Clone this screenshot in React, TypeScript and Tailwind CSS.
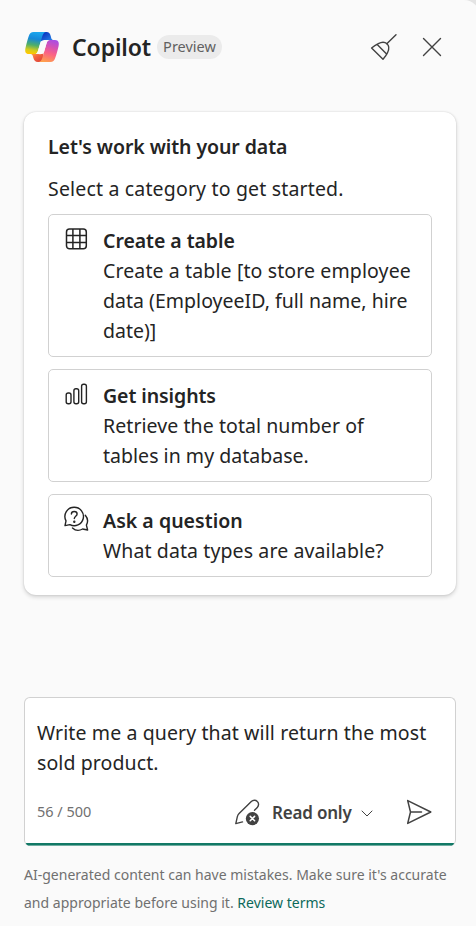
import React from "react";

type LineProps = { children: React.ReactNode; className?: string };

function Line({ children, className = "" }: LineProps) {
  return <span className={`block whitespace-nowrap ${className}`}>{children}</span>;
}

function CopilotLogo() {
  return (
    <svg width="36" height="32" viewBox="0 0 36 32" fill="none">
      <defs>
        <linearGradient id="left" x1="13" y1="0" x2="9" y2="23" gradientUnits="userSpaceOnUse">
          <stop offset="0.05" stopColor="#1AA7EE" />
          <stop offset="0.35" stopColor="#1688D8" />
          <stop offset="0.62" stopColor="#4DAE6A" />
          <stop offset="0.85" stopColor="#D5CC1C" />
          <stop offset="1" stopColor="#FFC800" />
        </linearGradient>
        <linearGradient id="right" x1="28" y1="8" x2="21" y2="31" gradientUnits="userSpaceOnUse">
          <stop stopColor="#A54DE8" />
          <stop offset="0.3" stopColor="#D251B8" />
          <stop offset="0.6" stopColor="#FA6186" />
          <stop offset="1" stopColor="#FFA04C" />
        </linearGradient>
        <linearGradient id="top" x1="20" y1="2" x2="25" y2="9" gradientUnits="userSpaceOnUse">
          <stop stopColor="#0B35C0" />
          <stop offset="1" stopColor="#1F74E0" />
        </linearGradient>
        <linearGradient id="bottom" x1="9" y1="22" x2="15" y2="31" gradientUnits="userSpaceOnUse">
          <stop stopColor="#FF9A3C" />
          <stop offset="0.5" stopColor="#F2603F" />
          <stop offset="1" stopColor="#E0483A" />
        </linearGradient>
      </defs>
      <path d="M14 1H22.500C25 1 26 2.500 26.700 5L27.300 7.200C27.600 8.400 28.400 9 30 9H22C19.500 9 18 9.500 17 10.500L16 8Z" fill="url(#top)" />
      <path d="M21 31H14C11 31 10 29.200 9.400 27L8.800 25C8.400 23.500 7.500 23 6 23H14C17 23 18.500 22 19.500 21L19 26Z" fill="url(#bottom)" />
      <path d="M9.600 1H22.400C20.200 1 19 3 18.200 5.600L14.100 19.400C13.400 21.800 12.400 23 10.200 23H5C1.200 23 .7 20 1.600 16.400C2.700 12 3.500 8.800 4.800 5C5.700 2.400 7 1 9.600 1Z" fill="url(#left)" />
      <path d="M26.400 31H14.500C16.600 31 17.700 29 18.400 26.800L22.500 12.600C23.200 10.200 24.100 9 26.200 9H31C34.800 9 35.300 12 34.500 15.400C33.400 20 32.600 23.200 31.200 27C30.300 29.600 29 31 26.400 31Z" fill="url(#right)" />
      <path d="M20.500 9.400C22.200 8.900 23.500 9 25 9C23.500 9.400 22.900 11 22.400 12.700L19.700 22C18.800 23.500 15 23.400 12 22.700C13.300 22 13.700 20.800 14.100 19.400L16.300 12C16.900 10.500 18.300 9.700 20.500 9.400Z" fill="#fafafa" />
    </svg>
  );
}

function BroomIcon() {
  return (
    <svg width="28" height="28" viewBox="0 0 28 28" fill="none" stroke="#424242" strokeWidth="1.4" strokeLinecap="round" strokeLinejoin="round">
      <path d="M26 1.700L16.800 10.700" />
      <path d="M1.600 15L13 26.300C15.500 23.500 16.700 21.600 17.600 19.500C19.300 16 19.200 12.900 17 10.800C14.800 8.700 11.600 8.800 8.300 10.600C6.100 11.700 4.200 12.800 1.600 15Z" />
      <path d="M7.200 11.400L16.600 21" />
    </svg>
  );
}

function CloseIcon() {
  return (
    <svg width="20" height="20" viewBox="0 0 20 20" stroke="#424242" strokeWidth="1.4" strokeLinecap="round">
      <path d="M1.500 1.500L18.500 18.500M18.500 1.500L1.500 18.500" />
    </svg>
  );
}

function TableIcon() {
  return (
    <svg width="26" height="26" viewBox="0 0 26 26" fill="none" stroke="#242424" strokeWidth="1.5">
      <rect x="3.500" y="3" width="19.800" height="19.800" rx="3" />
      <path d="M9.900 3V22.800M16.900 3V22.800M3.500 9.400H23.300M3.500 16.400H23.300" />
    </svg>
  );
}

function BarsIcon() {
  return (
    <svg width="26" height="26" viewBox="0 0 26 26" fill="none" stroke="#242424" strokeWidth="1.4">
      <rect x="3.200" y="12" width="4.800" height="10.800" rx="2" />
      <rect x="10.900" y="7.700" width="4.800" height="15.100" rx="2" />
      <rect x="18.600" y="3.300" width="4.800" height="19.500" rx="2" />
    </svg>
  );
}

function QuestionIcon() {
  return (
    <svg width="26" height="26" viewBox="0 0 26 26" fill="none" stroke="#242424" strokeWidth="1.4" strokeLinecap="round" strokeLinejoin="round">
      <path d="M11.300 1.300A9.200 9.200 0 1 1 6.900 18.600L2 19.600L3 14.800A9.200 9.200 0 0 1 11.300 1.300Z" />
      <path d="M8.400 8C8.400 4.600 14.100 4.600 14.100 8C14.100 10.300 11.300 10.300 11.300 12.600" />
      <circle cx="11.300" cy="15.700" r="0.500" fill="#242424" />
      <path d="M22.300 9.200C24.700 12 25.100 16 23.400 19.200L24.600 24L19.600 23C16 25 12 24.300 9.500 21.900" />
    </svg>
  );
}

function PenIcon() {
  return (
    <svg width="26" height="27" viewBox="0 0 26 27" fill="none">
      <path d="M8.500 22.900L1.800 24.600L3.300 17.800C3.600 16.500 4.200 15.500 5.100 14.600L17.300 2.500C19 .8 21.700 .8 23.300 2.400C25 4 25 6.700 23.300 8.400L20.500 11.200" stroke="#424242" strokeWidth="1.400" strokeLinecap="round" strokeLinejoin="round" />
      <circle cx="18.400" cy="19.600" r="6.600" fill="#424242" />
      <path d="M16.200 17.400L20.600 21.800M20.600 17.400L16.200 21.800" stroke="white" strokeWidth="1.500" strokeLinecap="round" />
    </svg>
  );
}

function SendIcon() {
  return (
    <svg width="26" height="26" viewBox="0 0 26 26" fill="none" stroke="#424242" strokeWidth="1.500" strokeLinecap="round" strokeLinejoin="round">
      <path d="M1.700 1.600L24.800 13L1.700 24.400L4.500 13ZM4.500 13H15.500" />
    </svg>
  );
}

type OptionProps = { icon: React.ReactNode; title: string; titleClass: string; children: React.ReactNode; className: string };

function Option({ icon, title, titleClass, children, className }: OptionProps) {
  return (
    <button className={`flex w-full items-start gap-[13px] rounded-[5px] border border-[#d1d1d1] pl-[14px] pt-[11px] text-left ${className}`}>
      <span className="flex w-[27px] shrink-0">{icon}</span>
      <span className="block text-[19.5px] leading-[30px]">
        <Line className={`font-semibold ${titleClass}`}>{title}</Line>
        {children}
      </span>
    </button>
  );
}

export default function App() {
  return (
    <div className="h-[926px] w-[476px] overflow-hidden bg-[#e4e4e4] font-['Noto_Sans','Open_Sans',sans-serif] text-[#242424]">
      <div className="flex h-full w-[480px] flex-col rounded-tr-[16px] bg-[#fafafa] pl-6 pr-6">
        <header className="flex h-[94px] w-[432px] items-center">
          <CopilotLogo />
          <h1 className="ml-3 w-[85px] whitespace-nowrap text-[23px] font-semibold tracking-[-0.1px]">Copilot</h1>
          <span className="flex h-6 w-[65px] items-center justify-center rounded-full bg-[#ebebeb] text-[14.5px] text-[#616161]">Preview</span>
          <button className="ml-auto"><BroomIcon /></button>
          <button className="ml-[24px] mr-[14px]"><CloseIcon /></button>
        </header>

        <main className="mt-[18px] h-[483px] w-[432px] rounded-[12px] bg-white px-6 pt-[20px] shadow-[0_0_2px_rgba(0,0,0,0.14),0_2px_4px_rgba(0,0,0,0.16)]">
          <h2 className="text-[19.5px] font-semibold leading-[30px]"><Line className="tracking-[-0.08px]">Let's work with your data</Line></h2>
          <p className="mt-3 text-[19.5px] leading-[30px]"><Line className="tracking-[0.17px]">Select a category to get started.</Line></p>
          <div className="mt-[10px] flex flex-col gap-3">
            <Option className="h-[143px]" icon={<TableIcon />} title="Create a table" titleClass="tracking-[-0.06px]">
              <Line className="tracking-[0.12px]">Create a table [to store employee</Line>
              <Line className="tracking-[0.02px]">data (EmployeeID, full name, hire</Line>
              <Line>date)]</Line>
            </Option>
            <Option className="h-[113px]" icon={<BarsIcon />} title="Get insights" titleClass="tracking-[-0.08px]">
              <Line className="tracking-[0.07px]">Retrieve the total number of</Line>
              <Line className="tracking-[0.03px]">tables in my database.</Line>
            </Option>
            <Option className="h-[83px]" icon={<QuestionIcon />} title="Ask a question" titleClass="tracking-[0.03px]">
              <Line className="tracking-[0.11px]">What data types are available?</Line>
            </Option>
          </div>
        </main>

        <section className="mt-[102px] flex h-[149px] w-[432px] shrink-0 flex-col overflow-hidden rounded-[6px] border border-b-0 border-[#d1d1d1] bg-white">
          <div className="px-3 pt-[20px] text-[19.5px] leading-[30px]">
            <Line className="tracking-[0.11px]">Write me a query that will return the most</Line>
            <Line className="tracking-[0.1px]">sold product.</Line>
          </div>
          <div className="mt-[17px] flex h-[34px] items-center pl-3 pr-[23px]">
            <span className="w-[197px] text-[14.5px] text-[#707070]">56 / 500</span>
            <span className="mt-[1px]"><PenIcon /></span>
            <span className="ml-3 mt-[2px] w-[89px] whitespace-nowrap text-[17px] font-semibold tracking-[-0.2px] text-[#424242]">Read only</span>
            <svg className="mt-[2px]" width="12" height="12" viewBox="0 0 12 12" fill="none" stroke="#424242" strokeLinecap="round" strokeLinejoin="round"><path d="M1 4L6 9L11 4" /></svg>
            <button className="ml-auto"><SendIcon /></button>
          </div>
          <div className="mt-auto h-[3px] shrink-0 border-b border-[#70ada1] bg-[#117865]" />
        </section>

        <footer className="mt-[15px] text-[14px] leading-[28px] text-[#707070]">
          <Line className="tracking-[0.01px]">AI-generated content can have mistakes. Make sure it's accurate</Line>
          <Line className="tracking-[0.01px]">and appropriate before using it. <a className="text-[#0c695a]">Review terms</a></Line>
        </footer>
      </div>
    </div>
  );
}
